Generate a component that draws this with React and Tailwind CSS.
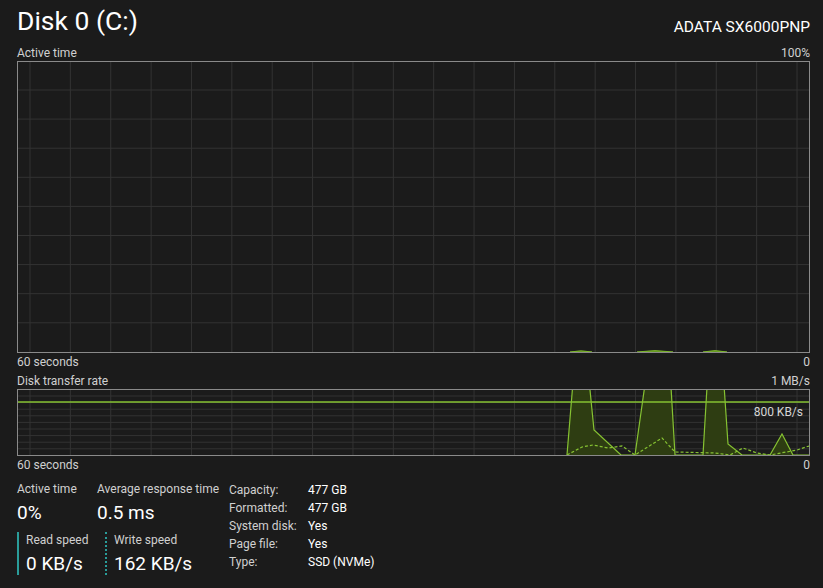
import React from 'react';

const GREEN = '#86c232';
const GRID = '#333333';

const vLines = Array.from({ length: 20 }, (_, i) => 12 + i * 40.37);

function ActiveTimeChart() {
  const hLines = Array.from({ length: 9 }, (_, i) => 28 + i * 29.1);
  return (
    <div className="h-[292px] w-[793px] border border-[#8a8a8a]">
      <svg className="block h-full w-full" viewBox="0 0 791 290" preserveAspectRatio="none">
        {vLines.map((x, i) => (
          <line key={i} x1={x} y1="0" x2={x} y2="290" stroke={GRID} strokeWidth="1" />
        ))}
        {hLines.map((y, i) => (
          <line key={i} x1="0" y1={y} x2="791" y2={y} stroke={GRID} strokeWidth="1" />
        ))}
        {/* tiny activity bumps near the baseline */}
        <path d="M552 290 Q563 287.5 574 290 Z" fill="#4f7a16" stroke={GREEN} strokeWidth="0.8" />
        <path d="M619 290 Q637 287 655 290 Z" fill="#4f7a16" stroke={GREEN} strokeWidth="0.8" />
        <path d="M685 290 Q697 287 709 290 Z" fill="#4f7a16" stroke={GREEN} strokeWidth="0.8" />
      </svg>
    </div>
  );
}

function TransferChart() {
  const hLines = Array.from({ length: 9 }, (_, i) => 6 + i * 6.6);
  const read = [
    [549, 65], [556, -20], [570, -20], [576, 40], [603, 65], [617, 65],
    [629, -20], [652, -20], [657, 65], [685, 65], [690, -20], [705, -20],
    [710, 54], [724, 65], [752, 65], [764, 44], [775, 65], [791, 65],
  ];
  const write = [
    [549, 65], [564, 57], [575, 55], [590, 58], [604, 56], [617, 65],
    [644, 48], [657, 62], [697, 63], [712, 65], [725, 58], [739, 63],
    [752, 65], [779, 60], [791, 56],
  ];
  const toPts = pts => pts.map(p => p.join(',')).join(' ');
  return (
    <div className="relative h-[67px] w-[793px] border border-[#8a8a8a]">
      <svg className="block h-full w-full" viewBox="0 0 791 65" preserveAspectRatio="none">
        {vLines.map((x, i) => (
          <line key={i} x1={x} y1="0" x2={x} y2="65" stroke={GRID} strokeWidth="1" />
        ))}
        {hLines.map((y, i) => (
          <line key={i} x1="0" y1={y} x2="791" y2={y} stroke={GRID} strokeWidth="1" />
        ))}
        <polygon points={toPts([...read, [791, 65], [549, 65]])} fill="#2e3d12" />
        <line x1="0" y1="12" x2="791" y2="12" stroke={GREEN} strokeWidth="1.5" />
        <polyline points={toPts(read)} fill="none" stroke={GREEN} strokeWidth="1.2" />
        <polyline points={toPts(write)} fill="none" stroke={GREEN} strokeWidth="1.2" strokeDasharray="3 2" />
      </svg>
      <span className="absolute right-[6px] top-[16px] text-[12px] leading-none text-[#d6d6d6]">800 KB/s</span>
    </div>
  );
}

function Stat({ label, value, className = '' }) {
  return (
    <div className={className}>
      <div className="text-[12px] leading-[16px] text-[#d0d0d0]">{label}</div>
      <div className="mt-[4px] text-[19px] leading-[23px] text-white">{value}</div>
    </div>
  );
}

export default function App() {
  const details = [
    ['Capacity:', '477 GB'],
    ['Formatted:', '477 GB'],
    ['System disk:', 'Yes'],
    ['Page file:', 'Yes'],
    ['Type:', 'SSD (NVMe)'],
  ];

  return (
    <div
      className="h-[588px] w-[823px] overflow-hidden bg-[#1b1b1b] pl-[17px] text-[#d0d0d0]"
      style={{ fontFamily: '"Segoe UI", Roboto, sans-serif' }}
    >
      <div className="w-[793px]">
        {/* Header */}
        <div className="flex h-[44px] items-end justify-between pb-[6px]">
          <h1 className="text-[26.5px] leading-[34px] text-white">Disk 0 (C:)</h1>
          <span className="pb-[1px] text-[15.5px] leading-[20px] text-white">ADATA SX6000PNP</span>
        </div>

        <div className="flex h-[17px] items-center justify-between text-[12px]">
          <span>Active time</span>
          <span>100%</span>
        </div>
        <ActiveTimeChart />
        <div className="flex h-[17px] items-center justify-between text-[12px]">
          <span>60 seconds</span>
          <span>0</span>
        </div>

        <div className="mt-[2px] flex h-[17px] items-center justify-between text-[12px]">
          <span>Disk transfer rate</span>
          <span>1 MB/s</span>
        </div>
        <TransferChart />
        <div className="flex h-[18px] items-center justify-between text-[12px]">
          <span>60 seconds</span>
          <span>0</span>
        </div>

        {/* Stats */}
        <div className="mt-[7px] flex items-start">
          <div className="w-[212px]">
            <div className="flex">
              <Stat label="Active time" value="0%" className="w-[80px]" />
              <Stat label="Average response time" value="0.5 ms" />
            </div>
            <div className="mt-[8px] flex">
              <div className="w-[88px] border-l-2 border-[#2a9d9a] pl-[7px]">
                <Stat label="Read speed" value="0 KB/s" />
              </div>
              <div className="border-l-2 border-dotted border-[#2a9d9a] pl-[7px]">
                <Stat label="Write speed" value="162 KB/s" />
              </div>
            </div>
          </div>
          <div className="grid grid-cols-[79px_auto] text-[12px] leading-[18px]">
            {details.map(([k, v]) => (
              <React.Fragment key={k}>
                <span className="text-[#d0d0d0]">{k}</span>
                <span className="text-white">{v}</span>
              </React.Fragment>
            ))}
          </div>
        </div>
      </div>
    </div>
  );
}
